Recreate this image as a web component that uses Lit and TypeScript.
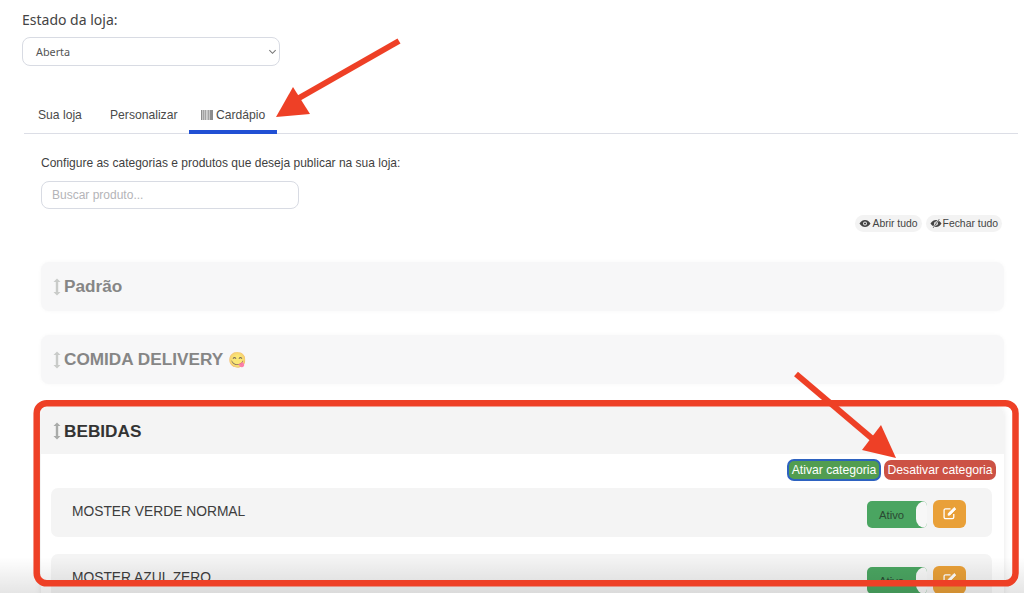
import { LitElement, html, css, svg } from "lit";
import { customElement } from "lit/decorators.js";

const grip = html`<svg class="grip" width="8" height="18" viewBox="0 0 8 18"><path d="M4 0.5 7.500 4H5.200V14H7.500L4 17.500 0.500 14H2.800V4H0.500Z" fill="currentColor"/></svg>`;
const edit = html`<svg class="pen" width="14" height="14" viewBox="0 0 13 13" fill="none" stroke="#fff" stroke-width="1.200"><path d="M10 7.500V10.500A1.300 1.300 0 0 1 8.700 11.800H2.300A1.300 1.300 0 0 1 1 10.500V4A1.300 1.300 0 0 1 2.300 2.700H7"/><path d="M5 6.800 10.400 1.400 11.900 2.900 6.500 8.300 4.700 8.600Z" fill="#fff" stroke-width=".8"/></svg>`;
const eye = svg`<path d="M.5 4.500C2 2 4 1 6 1s4 1 5.500 3.500C10 7 8 8 6 8S2 7 .5 4.500Z" fill="#444"/><circle cx="6" cy="4.500" r="1.900" fill="#f3f3f3"/><circle cx="6" cy="4.500" r="1.100" fill="#444"/>`;

@customElement("app-root")
export class AppRoot extends LitElement {
  static styles = css`
    :host { display: block; position: relative; width: 1024px; height: 593px; overflow: hidden; background: #fff;
      font-family: "Liberation Sans", Arial, sans-serif; color: #333; }
    .page { display: flex; flex-direction: column; padding: 11px 6px 0 22px; }
    .state-label { font: 14px/18px "Noto Sans", sans-serif; color: #444; height: 26px; }
    .select { width: 258px; height: 29px; box-sizing: border-box; border: 1px solid #d8dbe3; border-radius: 8px;
      display: flex; align-items: center; justify-content: space-between; padding: 0 2px 0 13px;
      font: 10.800px "Noto Sans", sans-serif; color: #555; }
    .tabs { margin-top: 33px; margin-left: 2px; height: 35px; box-sizing: border-box; border-bottom: 1px solid #dcdee6;
      display: flex; font-size: 12.150px; color: #4a4a4a; }
    .tab { height: 34px; box-sizing: border-box; padding: 9px 0 0; white-space: nowrap; }
    .tab.a { margin-left: 14px; width: 72px; }
    .tab.b { width: 79px; }
    .tab.c { width: 88px; border-bottom: 4px solid #2150d4; height: 35px; padding-left: 12px; display: flex; gap: 3px; }
    .barcode { margin-top: 2px; }
    .body { padding: 0 14px 0 19px; display: flex; flex-direction: column; }
    .intro { margin-top: 22px; font-size: 12.030px; line-height: 15px; color: #3f3f3f; }
    .search { margin-top: 10px; width: 258px; height: 28px; box-sizing: border-box; border: 1px solid #d8dbe3; border-radius: 8px;
      padding: 0 10px; display: flex; align-items: center; font-size: 12px; color: #b4b4b8; }
    .tools { margin-top: 6px; margin-right: 2px; display: flex; justify-content: flex-end; gap: 4px; }
    .pill { height: 17px; border-radius: 9px; background: #f3f3f3; display: flex; align-items: center; gap: 1px;
      padding: 0 4px; font-size: 10.400px; color: #444; }
    .card { margin-top: 30px; width: 963px; height: 49px; box-sizing: border-box; background: #f7f7f8; border-radius: 8px;
      box-shadow: 0 0 4px rgba(0,0,0,.03); display: flex; align-items: center; gap: 3px; padding-left: 12px;
      font-size: 17.200px; font-weight: 700; color: #868686; }
    .card + .card { margin-top: 24px; }
    .grip { color: #c9cbc9; flex: none; }
    .emoji { font-size: 15px; margin-left: 2px; opacity: .65; }
    .open { margin-top: 23px; width: 963px; height: 220px; border-radius: 8px; box-shadow: 0 0 6px rgba(0,0,0,.10); background: #fff; overflow: hidden; }
    .open-head { height: 47px; box-sizing: border-box; padding: 1px 0 0 12px; background: #f4f4f4; display: flex; align-items: center; gap: 3px;
      font-size: 17.200px; font-weight: 700; color: #333; }
    .open-head .grip { color: #a9aba9; }
    .actions { display: flex; justify-content: flex-end; align-items: center; gap: 3px; padding: 5px 8px 0 0; height: 21px; }
    .cat { box-sizing: border-box; border-radius: 7px; color: #fff; font-size: 12.200px; display: flex; align-items: center; justify-content: center; }
    .cat.on { width: 94px; height: 22px; background: #529d50; border: 2px solid #2d62c0; }
    .cat.off { width: 112px; height: 20px; background: #cc5245; }
    .item { margin: 8px 12px 0 10px; height: 49px; background: #f4f4f4; border-radius: 7px; display: flex; align-items: center;
      padding-left: 21px; font-size: 13.800px; color: #3d3d3d; }
    .item + .item { margin-top: 17px; }
    .item span.name { flex: 1; margin-top: -2px; }
    .switch { width: 60px; height: 27px; margin-top: 3px; padding: 2px 0 0 12px; border-radius: 5px; background: #4aa561; font-size: 11.300px; color: #2b4a33; display: flex; align-items: center; box-sizing: border-box; position: relative; overflow: hidden; }
    .switch::after { content: ""; position: absolute; right: 0; top: 0; width: 11px; height: 27px; border-radius: 9px 0 0 9px; background: #f7f7f7; }
    .edit { width: 33px; height: 28px; margin: 2px 26px 0 6px; background: #e9a038; border-radius: 6px; display: flex; align-items: center; justify-content: center; }
    .pen { margin-top: -1px; }
    .fade { position: absolute; left: 0; right: 0; bottom: 0; height: 36px; background: linear-gradient(rgba(0,0,0,0), rgba(0,0,0,.10)); pointer-events: none; }
    .overlay { position: absolute; inset: 0; pointer-events: none; }
  `;

  render() {
    return html`
      <div class="page">
        <div class="state-label">Estado da loja:</div>
        <div class="select">Aberta
          <svg width="9" height="6" viewBox="0 0 10 6" fill="none" stroke="#777" stroke-width="1.200"><path d="M1.500 1 5 4.500 8.500 1"/></svg>
        </div>
        <div class="tabs">
          <div class="tab a">Sua loja</div>
          <div class="tab b">Personalizar</div>
          <div class="tab c">
            <svg class="barcode" width="12" height="10" viewBox="0 0 12 10" fill="#8d8d8d"><path d="M0 0h1.500v10H0zM2.200 0h1.300v10H2.200zM4.200 0h1v10h-1zM5.800 0h.7v10h-.7zM7.100 0h.8v10h-.8zM8.500 0H12v10H8.500z"/></svg>
            Cardápio
          </div>
        </div>
        <div class="body">
          <div class="intro">Configure as categorias e produtos que deseja publicar na sua loja:</div>
          <div class="search">Buscar produto...</div>
          <div class="tools">
            <div class="pill"><svg width="12" height="9" viewBox="0 0 12 9">${eye}</svg>Abrir tudo</div>
            <div class="pill"><svg width="12" height="9" viewBox="0 0 12 9">${eye}<path d="M9 0 3 9" stroke="#f3f3f3" stroke-width="1.600"/><path d="M9.200 .2 3.200 8.800" stroke="#444" stroke-width=".8"/></svg>Fechar tudo</div>
          </div>
          <div class="card">${grip}Padrão</div>
          <div class="card">${grip}COMIDA DELIVERY <span class="emoji">😋</span></div>
          <div class="open">
            <div class="open-head">${grip}BEBIDAS</div>
            <div class="actions">
              <div class="cat on">Ativar categoria</div>
              <div class="cat off">Desativar categoria</div>
            </div>
            <div class="item"><span class="name">MOSTER VERDE NORMAL</span><div class="switch">Ativo</div><div class="edit">${edit}</div></div>
            <div class="item"><span class="name">MOSTER AZUL ZERO</span><div class="switch">Ativo</div><div class="edit">${edit}</div></div>
          </div>
        </div>
      </div>
      <div class="fade"></div>
      <svg class="overlay" width="1024" height="593" viewBox="0 0 1024 593">
        <rect x="36.700" y="403.200" width="978.800" height="180.100" rx="10" fill="none" stroke="#ee4026" stroke-width="6.500"/>
        <path d="M399 41 299 98" stroke="#ee4026" stroke-width="6" fill="none"/>
        <path d="M293 87 276 117 310 114Z" fill="#ee4026"/>
        <path d="M796 374 875 441" stroke="#ee4026" stroke-width="6" fill="none"/>
        <path d="M881 425 862 450 896 458Z" fill="#ee4026"/>
      </svg>
    `;
  }
}
